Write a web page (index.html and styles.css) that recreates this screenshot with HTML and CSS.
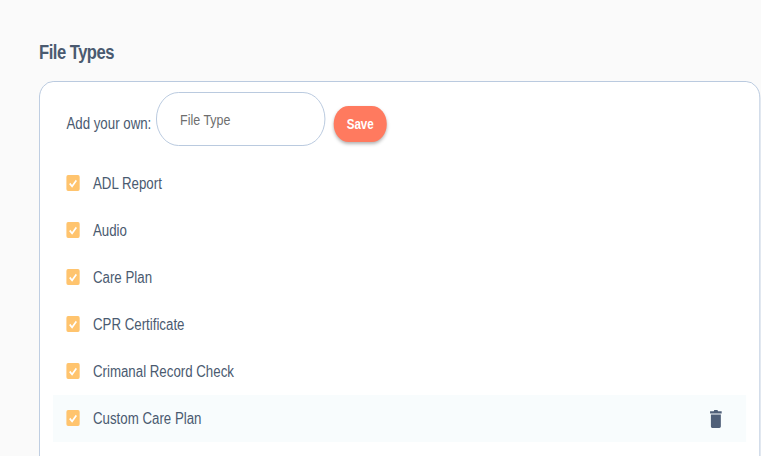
FILE: index.html
```html
<!DOCTYPE html>
<html lang="en">
<head>
    <meta charset="UTF-8">
    <meta name="viewport" content="width=device-width, initial-scale=1.0">
    <title>File Types</title>
    <link rel="stylesheet" href="styles.css">
</head>
<body>
    <div class="page">
        <h2 class="title">File Types</h2>
        <div class="card">
            <form class="add-row">
                <label class="add-label" for="type">Add your own:</label>
                <input class="add-input" id="type" type="text" placeholder="File Type">
                <button class="save" type="button">Save</button>
            </form>
            <ul class="types">
                <li class="type"><span class="check"><svg viewBox="0 0 14 14"><path d="M3.500 7.400l2.500 2.500L10.500 4.600"/></svg></span>ADL Report</li>
                <li class="type"><span class="check"><svg viewBox="0 0 14 14"><path d="M3.500 7.400l2.500 2.500L10.500 4.600"/></svg></span>Audio</li>
                <li class="type"><span class="check"><svg viewBox="0 0 14 14"><path d="M3.500 7.400l2.500 2.500L10.500 4.600"/></svg></span>Care Plan</li>
                <li class="type"><span class="check"><svg viewBox="0 0 14 14"><path d="M3.500 7.400l2.500 2.500L10.500 4.600"/></svg></span>CPR Certificate</li>
                <li class="type"><span class="check"><svg viewBox="0 0 14 14"><path d="M3.500 7.400l2.500 2.500L10.500 4.600"/></svg></span>Crimanal Record Check</li>
                <li class="type hover"><span class="check"><svg viewBox="0 0 14 14"><path d="M3.500 7.400l2.500 2.500L10.500 4.600"/></svg></span>Custom Care Plan
                    <svg class="trash" viewBox="0 0 14 18"><path d="M5 0h4l.5 1.200H14v2.300H0V1.200h4.500zM1 4.500h12V16.300c0 .9-.8 1.700-1.700 1.700H2.700C1.800 18 1 17.200 1 16.300z"/></svg>
                </li>
            </ul>
        </div>
    </div>
</body>
</html>
```

FILE: styles.css
```css
html, body {
    margin: 0;
    height: 100%;
    overflow: hidden;
}

body {
    background: #fafafa;
    font-family: "Liberation Sans", sans-serif;
    color: #4a5a70;
}

/* the whole design is narrower than it is tall, same as the source capture */
.page {
    width: 916px;
    box-sizing: border-box;
    padding: 41px 0 0 47px;
    transform: scaleX(0.83);
    transform-origin: left top;
}

.title {
    margin: 0 0 17px;
    font-size: 20px;
    line-height: 23px;
    font-weight: bold;
    letter-spacing: -0.6px;
}

.card {
    background: #fff;
    border: 1px solid #b4c5dc;
    border-left-width: 1.5px;
    border-right-width: 1.5px;
    border-radius: 17px;
    height: 500px;
    padding: 10px 16px 0;
    box-sizing: border-box;
}

.add-row {
    display: flex;
    align-items: flex-start;
    padding-left: 16px;
}

.add-label {
    width: 104px;
    margin: 22px 4px 0 0;
    font-size: 16px;
    line-height: 20px;
    white-space: nowrap;
}

.add-input {
    width: 204px;
    height: 54px;
    box-sizing: border-box;
    border: 1px solid #b4c5dc;
    border-radius: 27px;
    padding: 1px 28px 0;
    font: 15px "Liberation Sans", sans-serif;
    outline: none;
}

.add-input::placeholder {
    color: #6e6e6e;
    opacity: 1;
}

.save {
    width: 64px;
    height: 36px;
    margin: 14px 0 0 10px;
    border: 0;
    border-radius: 18px;
    background: #ff7a5f;
    color: #fff;
    font: bold 14px "Liberation Sans", sans-serif;
    box-shadow: 0 2px 4px rgba(0, 0, 0, 0.3);
}

.types {
    list-style: none;
    margin: 14px 0 0;
    padding: 0;
}

.type {
    display: flex;
    align-items: center;
    height: 47px;
    padding: 0 29px 0 16px;
    font-size: 16px;
}

.type.hover {
    background: #f8fcfd;
}

.check {
    width: 16px;
    height: 16px;
    margin: -1px 16px 0 0;
    background: #ffc46e;
    border-radius: 2px;
    display: flex;
}

.check svg {
    width: 16px;
    height: 16px;
    fill: none;
    stroke: #fff;
    stroke-width: 1.7;
}

.trash {
    width: 15px;
    height: 18px;
    margin-left: auto;
    fill: #4f5f78;
}
```
